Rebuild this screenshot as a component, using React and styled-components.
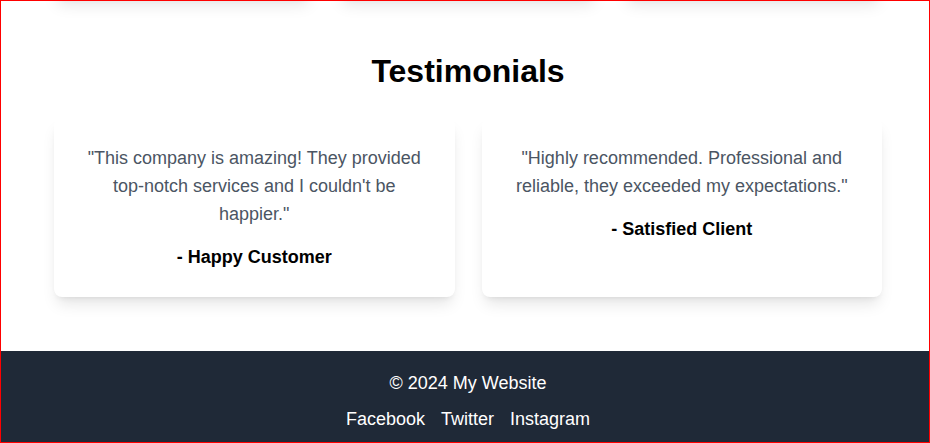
import React from "react";
import styled, { createGlobalStyle } from "styled-components";

const GlobalStyle = createGlobalStyle`
  *, *::before, *::after { box-sizing: border-box; }
  html, body { margin: 0; padding: 0; background: #ffffff; }
  body {
    font-family: "Liberation Sans", Arial, sans-serif;
    color: #000000;
    -webkit-font-smoothing: antialiased;
  }
`;

const Frame = styled.div`
  height: 100vh;
  border: 1px solid #ff0000;
  overflow: hidden;
  display: flex;
  flex-direction: column;
  background: #ffffff;
`;

const Page = styled.div`
  width: 934px;
  display: flex;
  flex-direction: column;
`;

const shadowLg = `0 10px 15px -3px rgba(0, 0, 0, 0.1), 0 4px 6px -4px rgba(0, 0, 0, 0.1)`;

const ServicesSection = styled.section`
  margin-top: -103px;
  padding: 0 53px;
`;

const CardGrid = styled.div`
  display: grid;
  grid-template-columns: repeat(${(p) => p.$cols}, 1fr);
  gap: 27px;
`;

const ServiceCard = styled.div`
  height: 100px;
  background: #ffffff;
  border-radius: 8px;
  box-shadow: ${shadowLg};
`;

const TestimonialsSection = styled.section`
  padding: 53px 53px 54px;
  display: flex;
  flex-direction: column;
`;

const Title = styled.h2`
  margin: 0 0 27px;
  text-align: center;
  font-size: 32px;
  line-height: 40px;
  font-weight: 700;
  color: #000000;
`;

const TestimonialCard = styled.div`
  background: #ffffff;
  border-radius: 8px;
  box-shadow: ${shadowLg};
  padding: 26px 24px;
  text-align: center;
`;

const Quote = styled.p`
  margin: 0;
  font-size: 18px;
  line-height: 28px;
  color: #4b5563;
`;

const Author = styled.p`
  margin: 15px 0 0;
  font-size: 18px;
  line-height: 28px;
  font-weight: 700;
  color: #000000;
`;

const Footer = styled.footer`
  background: #1f2937;
  color: #ffffff;
  padding: 18px 16px 16px;
  text-align: center;
`;

const Copyright = styled.p`
  margin: 0;
  font-size: 18px;
  line-height: 28px;
`;

const Links = styled.nav`
  margin-top: 8px;
  display: flex;
  justify-content: center;
  gap: 16px;
`;

const FooterLink = styled.a`
  color: #ffffff;
  text-decoration: none;
  font-size: 18px;
  line-height: 28px;
`;

const testimonials = [
  {
    quote:
      "\"This company is amazing! They provided top-notch services and I couldn't be happier.\"",
    author: "- Happy Customer",
  },
  {
    quote:
      "\"Highly recommended. Professional and reliable, they exceeded my expectations.\"",
    author: "- Satisfied Client",
  },
];

export default function App() {
  return (
    <>
      <GlobalStyle />
      <Frame>
        <Page>
          <ServicesSection>
            <CardGrid $cols={3}>
              <ServiceCard />
              <ServiceCard />
              <ServiceCard />
            </CardGrid>
          </ServicesSection>
          <TestimonialsSection>
            <Title>Testimonials</Title>
            <CardGrid $cols={2}>
              {testimonials.map((t) => (
                <TestimonialCard key={t.author}>
                  <Quote>{t.quote}</Quote>
                  <Author>{t.author}</Author>
                </TestimonialCard>
              ))}
            </CardGrid>
          </TestimonialsSection>
          <Footer>
            <Copyright>© 2024 My Website</Copyright>
            <Links>
              <FooterLink href="#">Facebook</FooterLink>
              <FooterLink href="#">Twitter</FooterLink>
              <FooterLink href="#">Instagram</FooterLink>
            </Links>
          </Footer>
        </Page>
      </Frame>
    </>
  );
}
